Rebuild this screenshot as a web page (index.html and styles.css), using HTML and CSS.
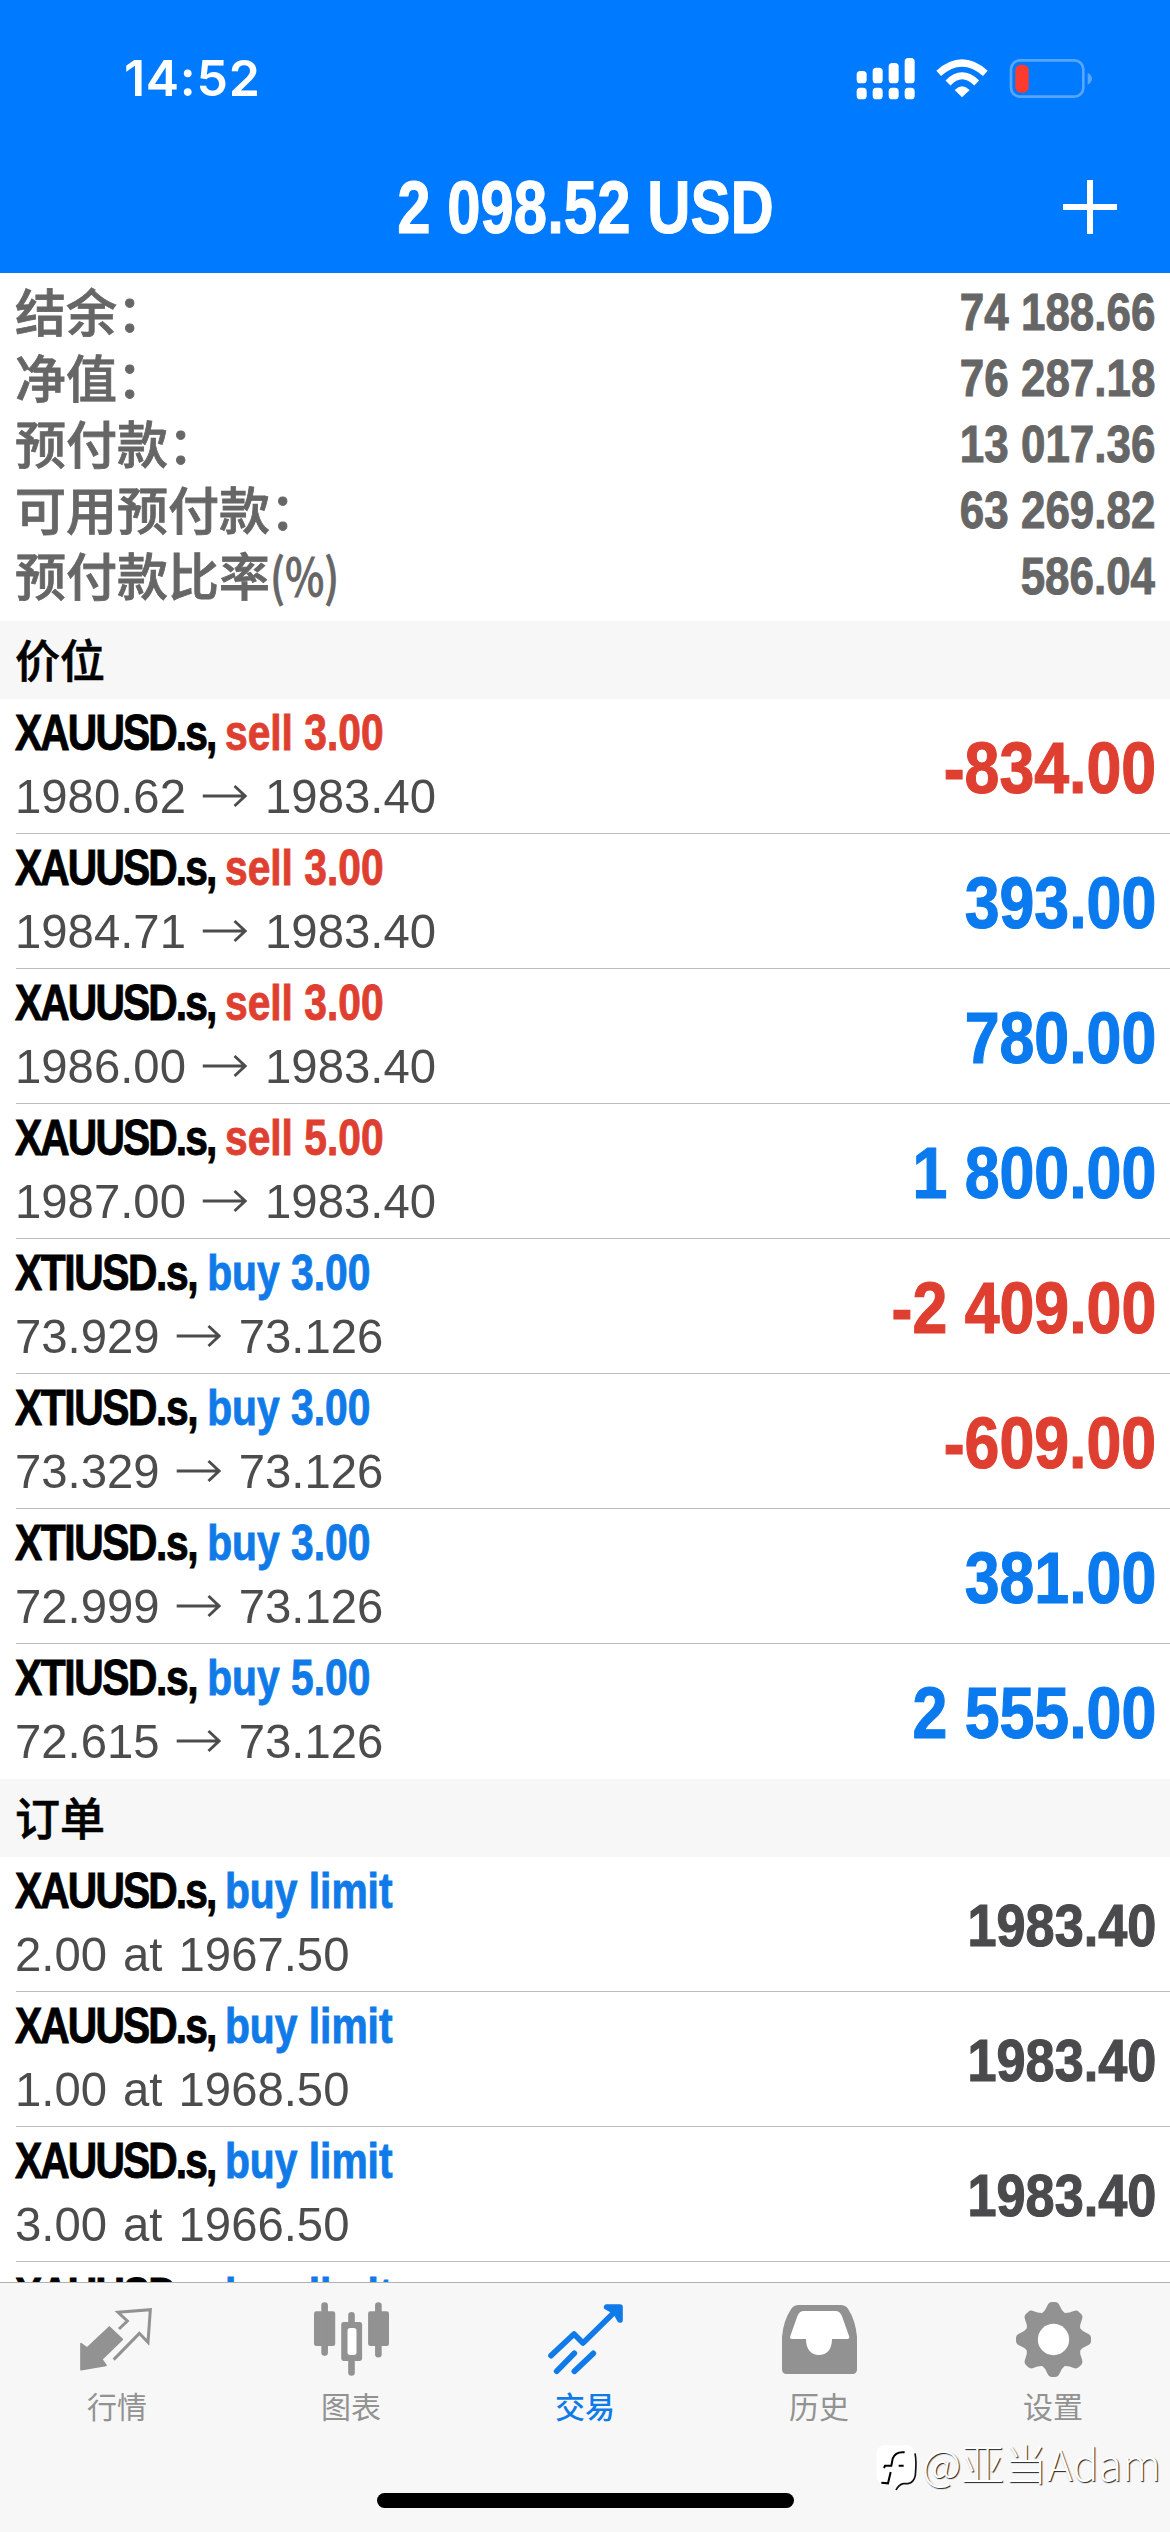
FILE: index.html
```html
<!DOCTYPE html>
<html lang="zh-CN">
<head>
<meta charset="utf-8">
<title>交易</title>
<link rel="stylesheet" href="styles.css">
</head>
<body>
<div class="screen">
  <header class="header">
    <div class="status">
      <span class="time">14:52</span>
      <svg class="indicators" viewBox="100 75 720 135" width="240" height="45">
        <g fill="#fff">
          <rect x="108" y="120" width="30" height="37" rx="11"/><rect x="156" y="110" width="30" height="47" rx="11"/>
          <rect x="204" y="96" width="30" height="61" rx="11"/><rect x="252" y="81" width="30" height="76" rx="11"/>
          <rect x="108" y="170" width="30" height="35" rx="11"/><rect x="156" y="170" width="30" height="35" rx="11"/>
          <rect x="204" y="170" width="30" height="35" rx="11"/><rect x="252" y="170" width="30" height="35" rx="11"/>
          <path d="M402 177Q424 155 447 177L424 199Z"/>
        </g>
        <path d="M354 127Q424 65 494 127M382 156Q424 113 468 156" fill="none" stroke="#fff" stroke-width="21"/>
        <rect x="571" y="88" width="217" height="109" rx="27" fill="none" stroke="#56a6ff" stroke-width="8"/>
        <path d="M801 125Q814 132 814 143Q814 154 801 161Z" fill="#56a6ff"/>
        <rect x="584" y="101" width="40" height="84" rx="16" fill="#ff3b30"/>
      </svg>
    </div>
    <div class="titlebar">
      <span class="title">2 098.52 USD</span>
      <svg class="plus" viewBox="0 0 54 54" width="54" height="54"><path d="M27 0V54M0 27H54" stroke="#fff" stroke-width="6"/></svg>
    </div>
  </header>

  <main class="content">
    <dl class="account">
      <div class="line"><dt>结余：</dt><dd>74 188.66</dd></div>
      <div class="line"><dt>净值：</dt><dd>76 287.18</dd></div>
      <div class="line"><dt>预付款：</dt><dd>13 017.36</dd></div>
      <div class="line"><dt>可用预付款：</dt><dd>63 269.82</dd></div>
      <div class="line"><dt>预付款比率<span class="pct">(%)</span></dt><dd>586.04</dd></div>
    </dl>

    <h2 class="section">价位</h2>
    <div class="row"><div class="info"><p class="name"><span class="sym">XAUUSD.s, </span><span class="sell">sell 3.00</span></p><p class="price">1980.62<svg class="arrow" viewBox="0 0 46 24"><path d="M0 12H44M33 2L44 12L33 22"/></svg>1983.40</p></div><span class="value neg">-834.00</span></div>
    <div class="row"><div class="info"><p class="name"><span class="sym">XAUUSD.s, </span><span class="sell">sell 3.00</span></p><p class="price">1984.71<svg class="arrow" viewBox="0 0 46 24"><path d="M0 12H44M33 2L44 12L33 22"/></svg>1983.40</p></div><span class="value">393.00</span></div>
    <div class="row"><div class="info"><p class="name"><span class="sym">XAUUSD.s, </span><span class="sell">sell 3.00</span></p><p class="price">1986.00<svg class="arrow" viewBox="0 0 46 24"><path d="M0 12H44M33 2L44 12L33 22"/></svg>1983.40</p></div><span class="value">780.00</span></div>
    <div class="row"><div class="info"><p class="name"><span class="sym">XAUUSD.s, </span><span class="sell">sell 5.00</span></p><p class="price">1987.00<svg class="arrow" viewBox="0 0 46 24"><path d="M0 12H44M33 2L44 12L33 22"/></svg>1983.40</p></div><span class="value">1 800.00</span></div>
    <div class="row"><div class="info"><p class="name"><span class="sym oil">XTIUSD.s, </span><span class="buy">buy 3.00</span></p><p class="price">73.929<svg class="arrow" viewBox="0 0 46 24"><path d="M0 12H44M33 2L44 12L33 22"/></svg>73.126</p></div><span class="value neg">-2 409.00</span></div>
    <div class="row"><div class="info"><p class="name"><span class="sym oil">XTIUSD.s, </span><span class="buy">buy 3.00</span></p><p class="price">73.329<svg class="arrow" viewBox="0 0 46 24"><path d="M0 12H44M33 2L44 12L33 22"/></svg>73.126</p></div><span class="value neg">-609.00</span></div>
    <div class="row"><div class="info"><p class="name"><span class="sym oil">XTIUSD.s, </span><span class="buy">buy 3.00</span></p><p class="price">72.999<svg class="arrow" viewBox="0 0 46 24"><path d="M0 12H44M33 2L44 12L33 22"/></svg>73.126</p></div><span class="value">381.00</span></div>
    <div class="row last"><div class="info"><p class="name"><span class="sym oil">XTIUSD.s, </span><span class="buy">buy 5.00</span></p><p class="price">72.615<svg class="arrow" viewBox="0 0 46 24"><path d="M0 12H44M33 2L44 12L33 22"/></svg>73.126</p></div><span class="value">2 555.00</span></div>

    <h2 class="section">订单</h2>
    <div class="row"><div class="info"><p class="name"><span class="sym">XAUUSD.s, </span><span class="buy">buy limit</span></p><p class="price">2.00 at 1967.50</p></div><span class="value market">1983.40</span></div>
    <div class="row"><div class="info"><p class="name"><span class="sym">XAUUSD.s, </span><span class="buy">buy limit</span></p><p class="price">1.00 at 1968.50</p></div><span class="value market">1983.40</span></div>
    <div class="row"><div class="info"><p class="name"><span class="sym">XAUUSD.s, </span><span class="buy">buy limit</span></p><p class="price">3.00 at 1966.50</p></div><span class="value market">1983.40</span></div>
    <div class="row"><div class="info"><p class="name"><span class="sym">XAUUSD.s, </span><span class="buy">buy limit</span></p></div></div>
  </main>

  <nav class="tabs">
    <div class="tab">
      <svg viewBox="0 0 225 225"><path fill="currentColor" stroke="currentColor" stroke-width="5" stroke-linejoin="round" d="M3 125L21 138L88 75L127 112L65 172L78 190L3 203Z"/><path fill="none" stroke="currentColor" stroke-width="9" d="M117 81L142 57L114 31L211 23L204 121L178 94L101 173"/></svg>
      <span>行情</span>
    </div>
    <div class="tab">
      <svg viewBox="0 0 226 225"><g fill="currentColor"><rect x="0" y="27" width="64" height="105" rx="7"/><rect x="22" y="0" width="20" height="162" rx="10"/><rect x="103" y="30" width="20" height="40" rx="10"/><rect x="103" y="165" width="20" height="57" rx="10"/><rect x="82" y="60" width="63" height="117" rx="7"/><rect x="163" y="27" width="63" height="105" rx="7"/><rect x="184" y="0" width="20" height="167" rx="10"/></g><rect x="101" y="78" width="27" height="81" rx="8" fill="#fff"/></svg>
      <span>图表</span>
    </div>
    <div class="tab active">
      <svg viewBox="0 0 225 225"><path fill="none" stroke="currentColor" stroke-width="17" stroke-linecap="round" stroke-linejoin="round" d="M9 161L78 96L105 123L208 22M26 208L79 154M79 208L136 154"/><path d="M176 15H216V54L202 29Z" fill="currentColor" stroke="currentColor" stroke-width="17" stroke-linejoin="round"/></svg>
      <span>交易</span>
    </div>
    <div class="tab">
      <svg viewBox="0 0 225 225"><path fill="currentColor" d="M0 105Q4 55 28 20Q36 9 50 9H176Q190 9 198 20Q221 55 225 105V202Q225 216 211 216H14Q0 216 0 202Z"/><path fill="#fff" d="M30 111Q22 111 25 102L46 43Q52 27 66 27H160Q174 27 180 43L201 102Q204 111 196 111H150C150 143 134 159 111 159C88 159 72 143 72 111Z"/></svg>
      <span>历史</span>
    </div>
    <div class="tab">
      <svg viewBox="0 0 225 225"><defs><path id="tooth" d="M76 36Q89 26 95 9Q99 0 108 0H117Q126 0 130 9Q136 26 149 36Z"/></defs><g fill="currentColor"><circle cx="112.5" cy="112.5" r="86"/><use href="#tooth"/><use href="#tooth" transform="rotate(45 112.5 112.5)"/><use href="#tooth" transform="rotate(90 112.5 112.5)"/><use href="#tooth" transform="rotate(135 112.5 112.5)"/><use href="#tooth" transform="rotate(180 112.5 112.5)"/><use href="#tooth" transform="rotate(225 112.5 112.5)"/><use href="#tooth" transform="rotate(270 112.5 112.5)"/><use href="#tooth" transform="rotate(315 112.5 112.5)"/></g><circle cx="112.5" cy="112.5" r="47" fill="#fff"/></svg>
      <span>设置</span>
    </div>
    <div class="home"></div>
    <div class="credit">
      <svg viewBox="0 0 126 144" width="42" height="48"><path fill="#fff" d="M22 4H98Q121 12 120 45V92Q118 116 98 122H82Q68 126 60 140L58 122H22Q2 118 2 95V30Q2 8 22 4Z"/><path d="M117 28Q122 50 118 94Q114 115 96 119H82Q68 122 60 138" fill="none" stroke="#111" stroke-width="5"/><path d="M86 25Q58 22 50 44L46 65H27L24 72M44 84L36 118L16 116M68 65H83" fill="none" stroke="#000" stroke-width="6"/></svg>
      <span>@亚当Adam</span>
    </div>
  </nav>
</div>
</body>
</html>
```
FILE: styles.css
```css
* { box-sizing: border-box; margin: 0; padding: 0; }

body {
  width: 1170px;
  height: 2532px;
  overflow: hidden;
  background: #fff;
  font-family: "Liberation Sans", "Noto Sans CJK SC", sans-serif;
}

.screen { display: flex; flex-direction: column; height: 2532px; }

.header { flex: none; height: 273px; background: #007aff; color: #fff; }

.status {
  display: flex;
  justify-content: space-between;
  align-items: center;
  height: 156px;
  padding: 0 76px 0 124px;
}
.time { font: 600 50px/60px Inter, sans-serif; letter-spacing: .7px; }

.titlebar {
  display: grid;
  grid-template-columns: 1fr auto 1fr;
  align-items: center;
  height: 101px;
  padding: 0 53px;
}
.title {
  grid-column: 2;
  font-size: 74px;
  font-weight: 700;
  line-height: 100px;
  margin: 2px -60px 0;
  transform: scaleX(.81);
  white-space: nowrap;
  -webkit-text-stroke: 1px currentColor;
}
.plus { justify-self: end; }

.content { flex: 1; min-height: 0; overflow: hidden; }

.account { padding: 6px 15px 12px; color: #666; height: 348px; }
.line { display: flex; justify-content: space-between; height: 66px; }
.line dt {
  font: 500 51px/62px "Noto Sans CJK SC", sans-serif;
  -webkit-text-stroke: .8px currentColor;
}
.pct { display: inline-block; transform: scaleX(.82); transform-origin: left; }
.line dd {
  font-size: 52px;
  font-weight: 700;
  line-height: 67px;
  transform: scaleX(.845);
  transform-origin: right;
  -webkit-text-stroke: 1px currentColor;
}

.section {
  height: 78px;
  padding-left: 15px;
  background: #f7f7f7;
  font: 500 45px/76px "Noto Sans CJK SC", sans-serif;
  color: #000;
  -webkit-text-stroke: .6px currentColor;
}

.row {
  display: flex;
  justify-content: space-between;
  height: 135px;
  margin-left: 16px;
  padding: 4px 14px 0 0;
  border-bottom: 1px solid #bcbcbf;
}
.row.last { border-bottom: 0; }
.info { margin-left: -1px; }
.name {
  width: max-content;
  font-size: 50px;
  font-weight: 700;
  line-height: 61px;
  white-space: pre;
  transform: scaleX(.815);
  transform-origin: left;
  -webkit-text-stroke: .9px currentColor;
}
.sym { letter-spacing: -2.3px; }
.sym.oil { letter-spacing: -1.7px; }
.sell { color: #df3f30; }
.buy { color: #107be8; }
.price {
  width: max-content;
  font-size: 49px;
  line-height: 65px;
  color: #4c4c4c;
  white-space: pre;
  word-spacing: 3px;
  transform: scaleX(.965);
  transform-origin: left;
}
.arrow {
  width: 47px;
  height: 24px;
  margin: 0 18px 5px 17px;
  fill: none;
  stroke: #4c4c4c;
  stroke-width: 3;
}
.value {
  font-size: 72px;
  font-weight: 700;
  line-height: 131px;
  color: #0a7aee;
  transform: scaleX(.87);
  transform-origin: right;
  -webkit-text-stroke: 1.2px currentColor;
}
.value.neg { color: #df3f30; }
.value.market { font-size: 59px; color: #4a4a4d; transform: scaleX(.885); }

.tabs {
  position: relative;
  flex: none;
  display: grid;
  grid-template-columns: repeat(5, 1fr);
  height: 250px;
  padding-top: 19px;
  border-top: 1px solid #b2b2b4;
  background: #f7f7f7;
  color: #929292;
}
.tab { display: flex; flex-direction: column; align-items: center; }
.tab svg { width: 75px; height: 75px; }
.tab span { margin-top: 6px; font: 400 30px/44px "Noto Sans CJK SC", sans-serif; }
.tab.active { color: #107be8; }
.tab.active span { font-weight: 500; }

.home {
  position: absolute;
  left: 377px;
  bottom: 24px;
  width: 417px;
  height: 15px;
  border-radius: 8px;
  background: #000;
}
.credit {
  position: absolute;
  left: 876px;
  top: 161px;
  display: flex;
  align-items: center;
  gap: 4px;
  color: #fff;
  font: 300 43px/56px "Noto Sans CJK SC", sans-serif;
  text-shadow: 1px 1px 1px #222;
  white-space: nowrap;
}
.credit span { margin-top: -12px; }
```
